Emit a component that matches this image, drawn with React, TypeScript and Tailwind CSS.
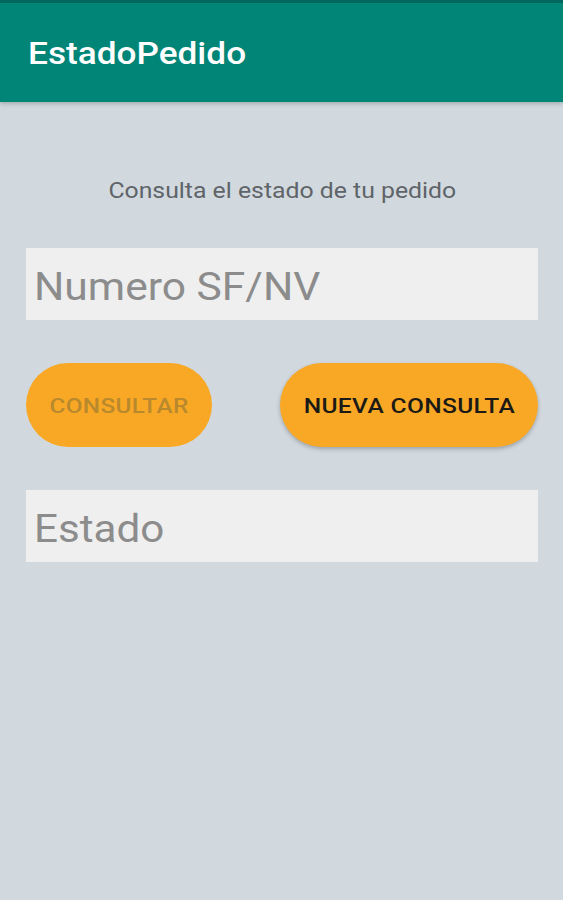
export default function App() {
  return (
    <div className="flex min-h-[900px] w-full flex-col bg-[#d1d9df] font-['Roboto',sans-serif]">
      <div className="h-[3px] bg-[#00695f]" />
      <header className="flex h-[99px] items-center bg-[#008577] pl-[28px] shadow-[0_2px_4px_rgba(0,0,0,0.2)]">
        <h1 className="mt-[3px] inline-block origin-left scale-x-[1.135] text-[31px] font-medium text-white">EstadoPedido</h1>
      </header>

      <main className="flex flex-col px-[26px] pr-[25px]">
        <p className="mt-[72px] text-center text-[22px] text-[#5f6469]">
          <span className="inline-block origin-center scale-x-[1.127]">Consulta el estado de tu pedido</span>
        </p>

        <div className="mt-[41px] flex h-[72px] items-center bg-[#efefef] pl-[8px] pt-[6px]">
          <span className="inline-block origin-left scale-x-[1.12] text-[38px] text-[#8c8c8c]">Numero SF/NV</span>
        </div>

        <div className="mt-[43px] flex items-center justify-between">
          <button className="h-[84px] w-[186px] rounded-full bg-[#f9a825] pt-[3px] text-[21px] font-medium tracking-[0.3px] text-[#b9892d]">
            <span className="inline-block scale-x-[1.16]">CONSULTAR</span>
          </button>
          <button className="h-[84px] w-[258px] rounded-full bg-[#f9a825] pt-[3px] text-[21px] font-medium tracking-[0.3px] text-[#1c1a16] shadow-[0_2px_4px_rgba(0,0,0,0.25)]">
            <span className="inline-block scale-x-[1.17]">NUEVA CONSULTA</span>
          </button>
        </div>

        <div className="mt-[43px] flex h-[72px] items-center bg-[#efefef] pl-[8px] pt-[6px]">
          <span className="inline-block origin-left scale-x-[1.11] text-[38px] text-[#8c8c8c]">Estado</span>
        </div>
      </main>
    </div>
  );
}
